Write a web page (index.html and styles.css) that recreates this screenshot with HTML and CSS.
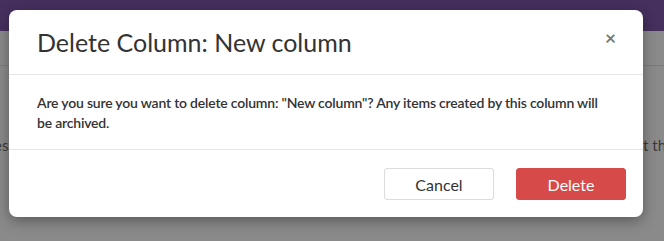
FILE: index.html
```html
<!DOCTYPE html>
<html lang="en">
<head>
    <meta charset="UTF-8">
    <title>Delete Column</title>
    <link rel="stylesheet" href="styles.css">
</head>
<body>

    <!-- Page behind the overlay -->
    <div class="page">
        <div class="topbar"></div>
        <div class="toolbar"></div>
        <div class="page-body">
            <span class="peek-left">es</span>
            <span class="peek-right">t th</span>
        </div>
    </div>

    <!-- Modal -->
    <div class="modal">
        <div class="modal-header">
            <h2 class="modal-title">Delete Column: New column</h2>
            <button class="modal-close">&times;</button>
        </div>
        <div class="modal-body">
            Are you sure you want to delete column: "New column"? Any items created by this column will be archived.
        </div>
        <div class="modal-footer">
            <button class="btn btn-default">Cancel</button>
            <button class="btn btn-danger">Delete</button>
        </div>
    </div>

</body>
</html>
```

FILE: styles.css
```css
body {
    font-family: "Source Sans Pro", Lato, "Noto Sans", sans-serif;
    margin: 0;
    padding: 0;
    width: 664px;
    height: 241px;
    overflow: hidden;
    position: relative;
    background-color: #8a8a8a;
}

/* Page behind the overlay */
.page {
    display: flex;
    flex-direction: column;
    height: 100%;
}

.topbar {
    height: 31px;
    background-color: #45305e;
}

.toolbar {
    height: 34px;
    border-bottom: 1px solid #7c7c7c;
}

.page-body {
    display: flex;
    justify-content: space-between;
    padding-top: 70px;
    color: #3a3a3a;
    font-size: 15px;
}

.peek-left {
    margin-left: -6px;
}

.peek-right {
    margin-right: -2px;
}

/* Modal */
.modal {
    position: absolute;
    top: 10px;
    left: 9px;
    width: 634px;
    background: #fff;
    border-radius: 8px;
    box-shadow: 0 4px 14px rgba(0, 0, 0, 0.35);
    color: #333;
}

.modal-header {
    display: flex;
    align-items: center;
    justify-content: space-between;
    height: 64px;
    padding: 0 27px 0 28px;
    border-bottom: 1px solid #e5e5e5;
}

.modal-title {
    margin: 0;
    font-size: 25px;
    font-weight: 400;
    color: #333;
}

.modal-close {
    border: none;
    background: none;
    padding: 0;
    margin-top: -10px;
    font-size: 19px;
    font-weight: bold;
    color: #777;
    font-family: inherit;
    cursor: pointer;
}

.modal-body {
    padding: 18px 30px 16px 28px;
    font-size: 14px;
    font-weight: 600;
    line-height: 20px;
    letter-spacing: -0.2px;
    border-bottom: 1px solid #e5e5e5;
}

.modal-footer {
    display: flex;
    justify-content: flex-end;
    gap: 22px;
    padding: 18px 17px 17px 0;
}

.btn {
    width: 110px;
    height: 32px;
    border-radius: 3px;
    font-family: inherit;
    font-size: 16px;
    cursor: pointer;
}

.btn-default {
    background: #fff;
    border: 1px solid #dcdcdc;
    color: #333;
}

.btn-danger {
    background: #d64a4a;
    border: 1px solid #d64a4a;
    color: #fff;
}
```
